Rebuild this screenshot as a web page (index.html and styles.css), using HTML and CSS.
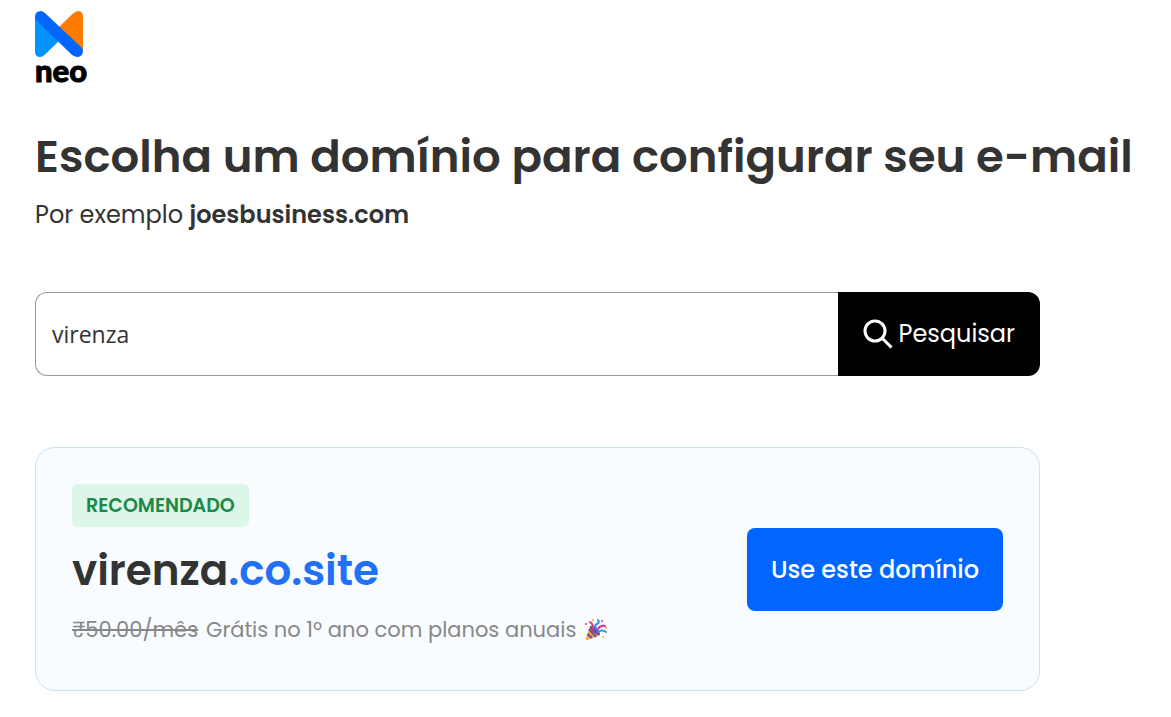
FILE: index.html
```html
<!DOCTYPE html>
<html lang="pt-BR">
<head>
    <meta charset="UTF-8">
    <meta name="viewport" content="width=device-width, initial-scale=1.0">
    <title>Neo</title>
    <link rel="stylesheet" href="styles.css">
</head>
<body>
    <div class="page">
        <header>
            <a class="logo" href="#">
                <svg viewBox="0 0 48 46" aria-hidden="true">
                    <path fill="#0093ff" d="M0 5L24 30L10 43.500Q7 46 5 46Q0 46 0 40Z"/>
                    <path fill="#ff7b00" d="M24 16L38 2.500Q41 0 43 0Q48 0 48 6V40Z"/>
                    <path fill="#0066ff" d="M0 6Q0 0 6 0Q8 0 11 3L47 37Q48 39 48 41Q47 46 42 46Q39 46 36 43L1 9Q0 8 0 6Z"/>
                </svg>
                <span>neo</span>
            </a>
        </header>
        <main>
            <h1>Escolha um domínio para configurar seu e-mail</h1>
            <p class="example">Por exemplo <strong>joesbusiness.com</strong></p>

            <form class="search">
                <input type="text" aria-label="Domínio" value="virenza">
                <button type="button">
                    <svg viewBox="0 0 30 30" aria-hidden="true">
                        <circle cx="12" cy="12" r="10"/>
                        <path d="M19 19L28.500 28.500"/>
                    </svg>
                    Pesquisar
                </button>
            </form>

            <section class="card">
                <div class="offer">
                    <span class="badge">RECOMENDADO</span>
                    <h2>virenza<span>.co.site</span></h2>
                    <p class="price">
                        <s>₹50.00/mês</s>
                        <span>Grátis no 1º ano com planos anuais</span>
                        <svg viewBox="0 0 24 24" role="img" aria-label="Festa">
                            <path fill="#f9a72b" d="M6 8L16 17L3 22Q1 22 2 20Z"/>
                            <path stroke="#6b4fa0" stroke-width="2" d="M5 11L12 19M3.500 16L8 20"/>
                            <ellipse cx="11" cy="12.500" rx="2.500" ry="6.500" transform="rotate(-47 11 12.500)" fill="#6b4fa0"/>
                            <g fill="none" stroke-width="2" stroke-linecap="round">
                                <path stroke="#ef2c8f" d="M9 11Q10 7 6 4M14 11Q16 7 21 8"/>
                                <path stroke="#2196e8" d="M12 10Q10 7 13 6Q16 5 14 2M14 14Q18 11 22 14"/>
                            </g>
                            <g fill="#f9a72b">
                                <circle cx="9" cy="2" r="1"/>
                                <circle cx="19" cy="19" r="1"/>
                                <circle cx="22" cy="10" r="1"/>
                            </g>
                            <g fill="#ef2c8f">
                                <circle cx="2" cy="6" r="1"/>
                                <circle cx="18" cy="3" r="1"/>
                            </g>
                        </svg>
                    </p>
                </div>
                <button type="button">Use este domínio</button>
            </section>
        </main>
    </div>
</body>
</html>
```
FILE: styles.css
```css
body {
    margin: 0;
    background: #fff;
    color: #333;
    font-family: Poppins, Inter, sans-serif;
}
.page {
    padding: 11px 35px 24px;
}
.logo {
    display: inline-flex;
    flex-direction: column;
    vertical-align: top;
    color: #000;
    text-decoration: none;
    font: 900 31px/26px Lato, sans-serif;
    -webkit-text-stroke: 1px #000;
}
.logo svg {
    width: 48px;
    height: 46px;
}
h1 {
    margin: 42px 0 0;
    font-size: 45px;
    line-height: 64px;
    font-weight: 600;
}
.example {
    margin: 8px 0 0;
    font-size: 24px;
    line-height: 36px;
}
.example strong {
    font-weight: 600;
}
.search {
    display: flex;
    max-width: 1005px;
    margin: 59px 0 0;
}
.search input {
    flex: 1;
    min-width: 0;
    padding: 24px 16px;
    border: 1px solid #999;
    border-right: 0;
    border-radius: 12px 0 0 12px;
    color: #333;
    font: 23px/34px "Open Sans", sans-serif;
}
.search button {
    display: flex;
    align-items: center;
    gap: 6px;
    padding: 24px 25px;
    border: 0;
    border-radius: 0 12px 12px 0;
    background: #000;
    color: #fff;
    font: 24px/36px Poppins, Inter, sans-serif;
}
.search svg {
    width: 30px;
    height: 30px;
    fill: none;
    stroke: #fff;
    stroke-width: 3;
}
.card {
    display: flex;
    align-items: center;
    justify-content: space-between;
    gap: 24px;
    box-sizing: border-box;
    max-width: 1005px;
    margin: 71px 0 0;
    padding: 36px;
    border: 1px solid #c8e2f8;
    border-radius: 20px;
    background: #f8fcff;
}
.offer {
    padding-bottom: 7px;
}
.badge {
    display: inline-block;
    padding: 6px 14px;
    border-radius: 6px;
    background: #dcf7e7;
    color: #1e874b;
    font-size: 19px;
    line-height: 31px;
    font-weight: 600;
}
h2 {
    margin: 12px 0 0;
    font-size: 42px;
    line-height: 64px;
    font-weight: 600;
}
h2 span {
    color: #2070f8;
}
.price {
    display: flex;
    align-items: center;
    gap: 8px;
    margin: 10px 0 0;
    color: #888;
    font-size: 21px;
    line-height: 34px;
}
.price svg {
    width: 24px;
    height: 24px;
}
.card button {
    padding: 24px;
    border: 0;
    border-radius: 8px;
    background: #06f;
    color: #fff;
    font: 500 24px/35px Poppins, Inter, sans-serif;
}
```
